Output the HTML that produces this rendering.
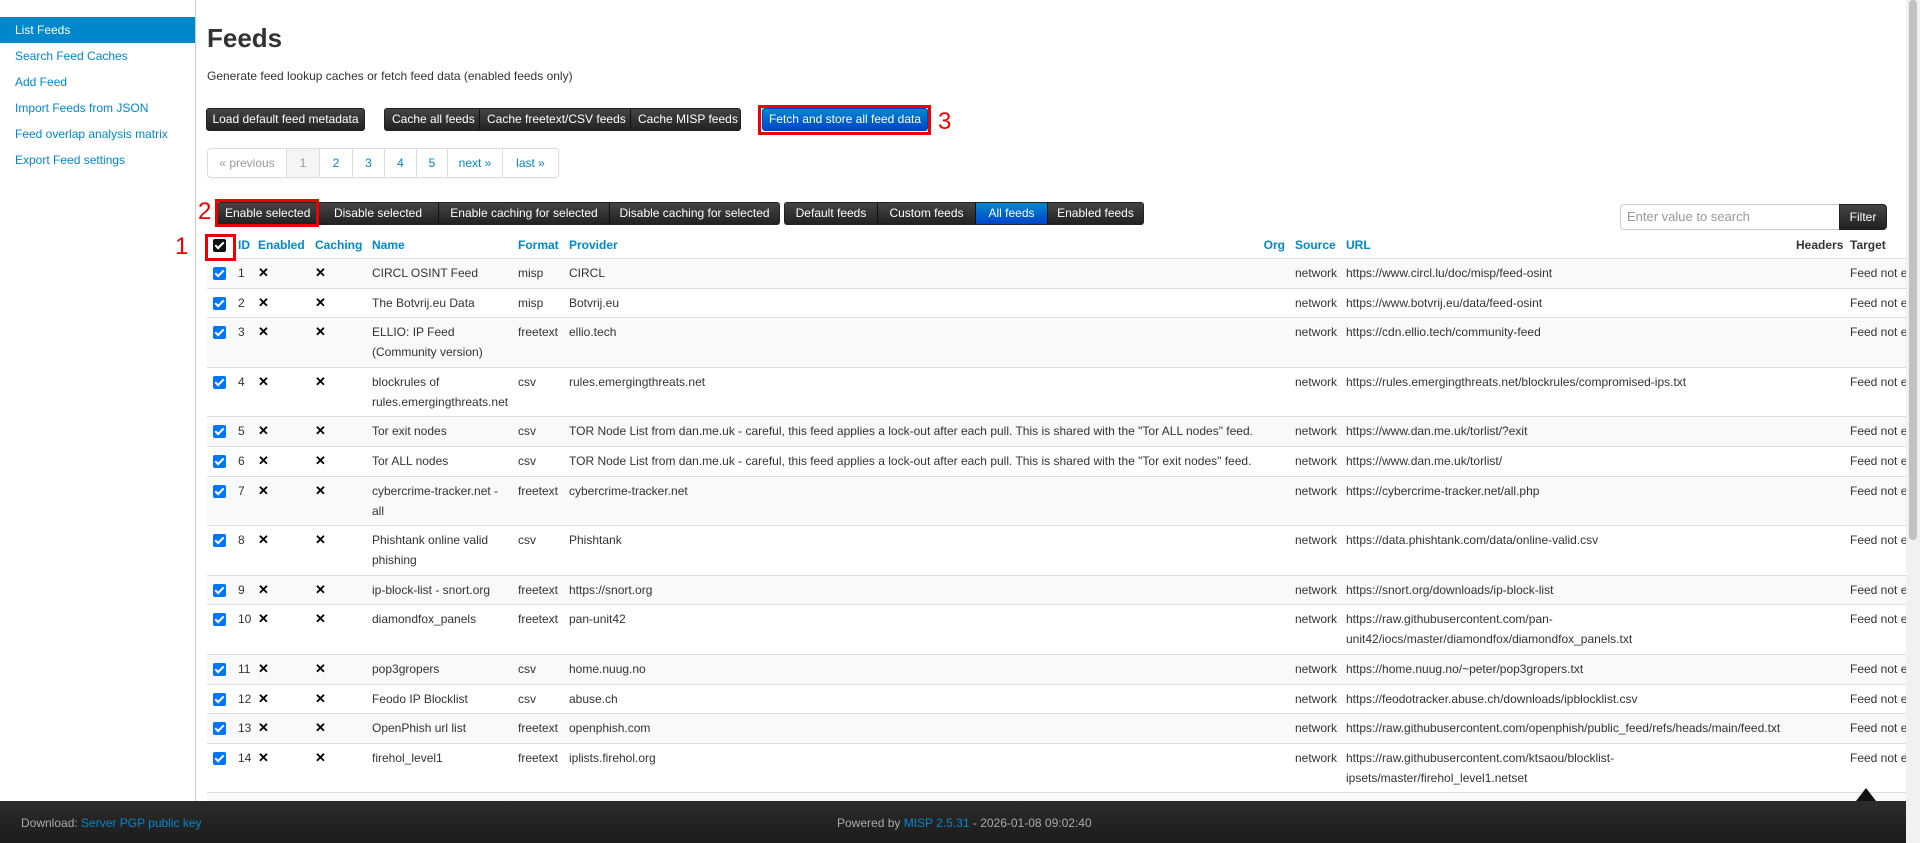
<!DOCTYPE html>
<html><head><meta charset="utf-8">
<style>
*{box-sizing:border-box}
html,body{margin:0;padding:0;width:1920px;height:843px;overflow:hidden;background:#fff;font-family:"Liberation Sans",Arial,sans-serif;font-size:12px;color:#333}
a{color:#0088cc;text-decoration:none}
.side{position:absolute;left:0;top:0;width:196px;height:801px;border-right:1px solid #ccc}
.side div{position:absolute;left:0;width:195px;height:26px;line-height:26px;padding-left:15px;color:#0088cc}
.side .act{background:#0088cc;color:#fff}
.abs{position:absolute}
h2{position:absolute;left:207px;top:22px;margin:0;font-size:26px;font-weight:bold;color:#333;line-height:32px}
.btn{position:absolute;height:23px;line-height:21px;color:#fff;background:linear-gradient(#444,#222);border:1px solid #222;border-radius:3px;font-size:12px;white-space:nowrap;text-align:center}
.grp{position:absolute;height:23px;display:flex;background:linear-gradient(#444,#222);border-radius:3px;border:1px solid #222}
.grp span{color:#fff;line-height:21px;padding:0 7px;border-right:1px solid #111;white-space:nowrap;text-align:center}
.grp span:last-child{border-right:none}
.grp .blue{background:linear-gradient(#0088cc,#0044cc)}
.red{position:absolute;border:3px solid #e00}
.rn{position:absolute;color:#e00;font-size:24px;line-height:24px}
.pag{position:absolute;left:207px;top:148px;height:30px;display:flex;border:1px solid #ddd;border-radius:4px;box-shadow:0 1px 2px rgba(0,0,0,.05)}
.pag span{line-height:28px;border-right:1px solid #ddd;text-align:center;color:#0088cc}
.pag span:last-child{border-right:none}
.wrap{position:absolute;left:207px;top:231px;width:1699px;height:570px;overflow:hidden}
table{border-collapse:collapse;table-layout:fixed;width:1753px}
td,th{padding:4px 5px 4.6px;line-height:20px;vertical-align:top;text-align:left;white-space:normal}
th{color:#0088cc;font-weight:bold;padding:4px 5px 3px}
th.k{color:#333}
td.p{white-space:nowrap}
tbody tr{border-top:1px solid #ddd}
tbody tr:nth-child(odd){background:#f9f9f9}
.cb{display:inline-block;width:13px;height:13px;border-radius:2px;background:#0075ff;position:relative;top:3px;margin-left:1px}
.cb:after{content:"";position:absolute;left:4px;top:1px;width:3px;height:7px;border:solid #fff;border-width:0 2px 2px 0;transform:rotate(45deg)}
.x{font-weight:bold;font-size:13px;color:#000}
.foot{position:absolute;left:0;top:801px;width:1906px;height:42px;background:linear-gradient(#2c2c2c,#1b1b1b);color:#aaa;font-size:12px}
.sb{position:absolute;left:1906px;top:0;width:14px;height:843px;background:#f1f1f1}
.sb div{position:absolute;left:3px;top:0;width:8px;height:540px;background:#c1c1c1;border-radius:4px}
</style></head><body>
<div class="side">
<div class="act" style="top:17px">List Feeds</div>
<div style="top:43px">Search Feed Caches</div>
<div style="top:69px">Add Feed</div>
<div style="top:95px">Import Feeds from JSON</div>
<div style="top:121px">Feed overlap analysis matrix</div>
<div style="top:147px">Export Feed settings</div>
</div>
<h2>Feeds</h2>
<div class="abs" style="left:207px;top:69px">Generate feed lookup caches or fetch feed data (enabled feeds only)</div>
<div class="btn" style="left:206px;top:108px;width:159px">Load default feed metadata</div>
<div class="grp" style="left:384px;top:108px;width:357px"><span style="width:95px">Cache all feeds</span><span style="width:151px">Cache freetext/CSV feeds</span><span style="flex:1">Cache MISP feeds</span></div>
<div class="red" style="left:758px;top:105px;width:173px;height:30px"></div>
<div class="btn" style="left:762px;top:108px;width:166px;background:linear-gradient(#0088cc,#0044cc);border-color:#04c">Fetch and store all feed data</div>
<div class="rn" style="left:938px;top:110px">3</div>
<div class="pag"><span style="width:79px;color:#999">« previous</span><span style="width:33px;background:#f5f5f5;color:#999">1</span><span style="width:33px">2</span><span style="width:32px">3</span><span style="width:32px">4</span><span style="width:31px">5</span><span style="width:55px">next »</span><span style="width:55px">last »</span></div>
<div class="rn" style="left:198px;top:200px">2</div>
<div class="grp" style="left:217px;top:202px;width:563px"><span style="width:100px">Enable selected</span><span style="width:121px">Disable selected</span><span style="width:171px">Enable caching for selected</span><span style="flex:1">Disable caching for selected</span></div>
<div class="red" style="left:215px;top:199px;width:104px;height:28px"></div>
<div class="grp" style="left:784px;top:202px;width:360px"><span style="width:93px">Default feeds</span><span style="width:98px">Custom feeds</span><span class="blue" style="width:72px">All feeds</span><span style="flex:1">Enabled feeds</span></div>
<div class="abs" style="left:1620px;top:204px;width:221px;height:26px;border:1px solid #ccc;border-radius:4px 0 0 4px;padding-left:6px;line-height:24px;color:#999;font-size:13px">Enter value to search</div>
<div class="btn" style="left:1839px;top:204px;width:48px;height:26px;line-height:24px;border-radius:0 4px 4px 0">Filter</div>
<div class="wrap">
<table>
<colgroup><col style="width:26px"><col style="width:20px"><col style="width:57px"><col style="width:57px"><col style="width:146px"><col style="width:51px"><col style="width:686px"><col style="width:40px"><col style="width:51px"><col style="width:455px"><col style="width:49px"><col style="width:115px"></colgroup>
<thead><tr><th style="padding-left:5px"><span class="cb" style="background:#111"></span></th><th>ID</th><th>Enabled</th><th>Caching</th><th>Name</th><th>Format</th><th>Provider</th><th style="text-align:right">Org</th><th>Source</th><th>URL</th><th class="k" style="text-align:right;padding-right:14px;padding-left:0">Headers</th><th class="k">Target</th></tr></thead>
<tbody>
<tr><td><span class="cb"></span></td><td>1</td><td class="x">✕</td><td class="x">✕</td><td>CIRCL OSINT Feed</td><td>misp</td><td class="p">CIRCL</td><td></td><td>network</td><td>https://www.circl.lu/doc/misp/feed-osint</td><td></td><td>Feed not enabled</td></tr>
<tr><td><span class="cb"></span></td><td>2</td><td class="x">✕</td><td class="x">✕</td><td>The Botvrij.eu Data</td><td>misp</td><td class="p">Botvrij.eu</td><td></td><td>network</td><td>https://www.botvrij.eu/data/feed-osint</td><td></td><td>Feed not enabled</td></tr>
<tr><td><span class="cb"></span></td><td>3</td><td class="x">✕</td><td class="x">✕</td><td>ELLIO: IP Feed (Community version)</td><td>freetext</td><td class="p">ellio.tech</td><td></td><td>network</td><td>https://cdn.ellio.tech/community-feed</td><td></td><td>Feed not enabled</td></tr>
<tr><td><span class="cb"></span></td><td>4</td><td class="x">✕</td><td class="x">✕</td><td>blockrules of rules.emergingthreats.net</td><td>csv</td><td class="p">rules.emergingthreats.net</td><td></td><td>network</td><td>https://rules.emergingthreats.net/blockrules/compromised-ips.txt</td><td></td><td>Feed not enabled</td></tr>
<tr><td><span class="cb"></span></td><td>5</td><td class="x">✕</td><td class="x">✕</td><td>Tor exit nodes</td><td>csv</td><td class="p">TOR Node List from dan.me.uk - careful, this feed applies a lock-out after each pull. This is shared with the "Tor ALL nodes" feed.</td><td></td><td>network</td><td>https://www.dan.me.uk/torlist/?exit</td><td></td><td>Feed not enabled</td></tr>
<tr><td><span class="cb"></span></td><td>6</td><td class="x">✕</td><td class="x">✕</td><td>Tor ALL nodes</td><td>csv</td><td class="p">TOR Node List from dan.me.uk - careful, this feed applies a lock-out after each pull. This is shared with the "Tor exit nodes" feed.</td><td></td><td>network</td><td>https://www.dan.me.uk/torlist/</td><td></td><td>Feed not enabled</td></tr>
<tr><td><span class="cb"></span></td><td>7</td><td class="x">✕</td><td class="x">✕</td><td>cybercrime-tracker.net - all</td><td>freetext</td><td class="p">cybercrime-tracker.net</td><td></td><td>network</td><td>https://cybercrime-tracker.net/all.php</td><td></td><td>Feed not enabled</td></tr>
<tr><td><span class="cb"></span></td><td>8</td><td class="x">✕</td><td class="x">✕</td><td>Phishtank online valid phishing</td><td>csv</td><td class="p">Phishtank</td><td></td><td>network</td><td>https://data.phishtank.com/data/online-valid.csv</td><td></td><td>Feed not enabled</td></tr>
<tr><td><span class="cb"></span></td><td>9</td><td class="x">✕</td><td class="x">✕</td><td>ip-block-list - snort.org</td><td>freetext</td><td class="p">https://snort.org</td><td></td><td>network</td><td>https://snort.org/downloads/ip-block-list</td><td></td><td>Feed not enabled</td></tr>
<tr><td><span class="cb"></span></td><td style="white-space:nowrap">10</td><td class="x">✕</td><td class="x">✕</td><td>diamondfox_panels</td><td>freetext</td><td class="p">pan-unit42</td><td></td><td>network</td><td>https://raw.githubusercontent.com/pan-unit42/iocs/master/diamondfox/diamondfox_panels.txt</td><td></td><td>Feed not enabled</td></tr>
<tr><td><span class="cb"></span></td><td style="white-space:nowrap">11</td><td class="x">✕</td><td class="x">✕</td><td>pop3gropers</td><td>csv</td><td class="p">home.nuug.no</td><td></td><td>network</td><td>https://home.nuug.no/~peter/pop3gropers.txt</td><td></td><td>Feed not enabled</td></tr>
<tr><td><span class="cb"></span></td><td style="white-space:nowrap">12</td><td class="x">✕</td><td class="x">✕</td><td>Feodo IP Blocklist</td><td>csv</td><td class="p">abuse.ch</td><td></td><td>network</td><td>https://feodotracker.abuse.ch/downloads/ipblocklist.csv</td><td></td><td>Feed not enabled</td></tr>
<tr><td><span class="cb"></span></td><td style="white-space:nowrap">13</td><td class="x">✕</td><td class="x">✕</td><td>OpenPhish url list</td><td>freetext</td><td class="p">openphish.com</td><td></td><td>network</td><td style="white-space:nowrap">https://raw.githubusercontent.com/openphish/public_feed/refs/heads/main/feed.txt</td><td></td><td>Feed not enabled</td></tr>
<tr><td><span class="cb"></span></td><td style="white-space:nowrap">14</td><td class="x">✕</td><td class="x">✕</td><td>firehol_level1</td><td>freetext</td><td class="p">iplists.firehol.org</td><td></td><td>network</td><td>https://raw.githubusercontent.com/ktsaou/blocklist-ipsets/master/firehol_level1.netset</td><td></td><td>Feed not enabled</td></tr>
<tr><td>&nbsp;</td><td></td><td></td><td></td><td></td><td></td><td></td><td></td><td></td><td></td><td></td><td></td></tr>
</tbody></table>
</div>
<div class="red" style="left:205px;top:234px;width:31px;height:27px"></div>
<div class="rn" style="left:175px;top:235px">1</div>
<div class="abs" style="left:1856px;top:788px;width:0;height:0;border-left:10px solid transparent;border-right:10px solid transparent;border-bottom:13px solid #111"></div>
<div class="foot">
<div class="abs" style="left:21px;top:15px">Download: <a>Server PGP public key</a></div>
<div class="abs" style="left:837px;top:15px">Powered by <a>MISP 2.5.31</a> - 2026-01-08 09:02:40</div>
</div>
<div class="sb"><div></div></div>
</body></html>
